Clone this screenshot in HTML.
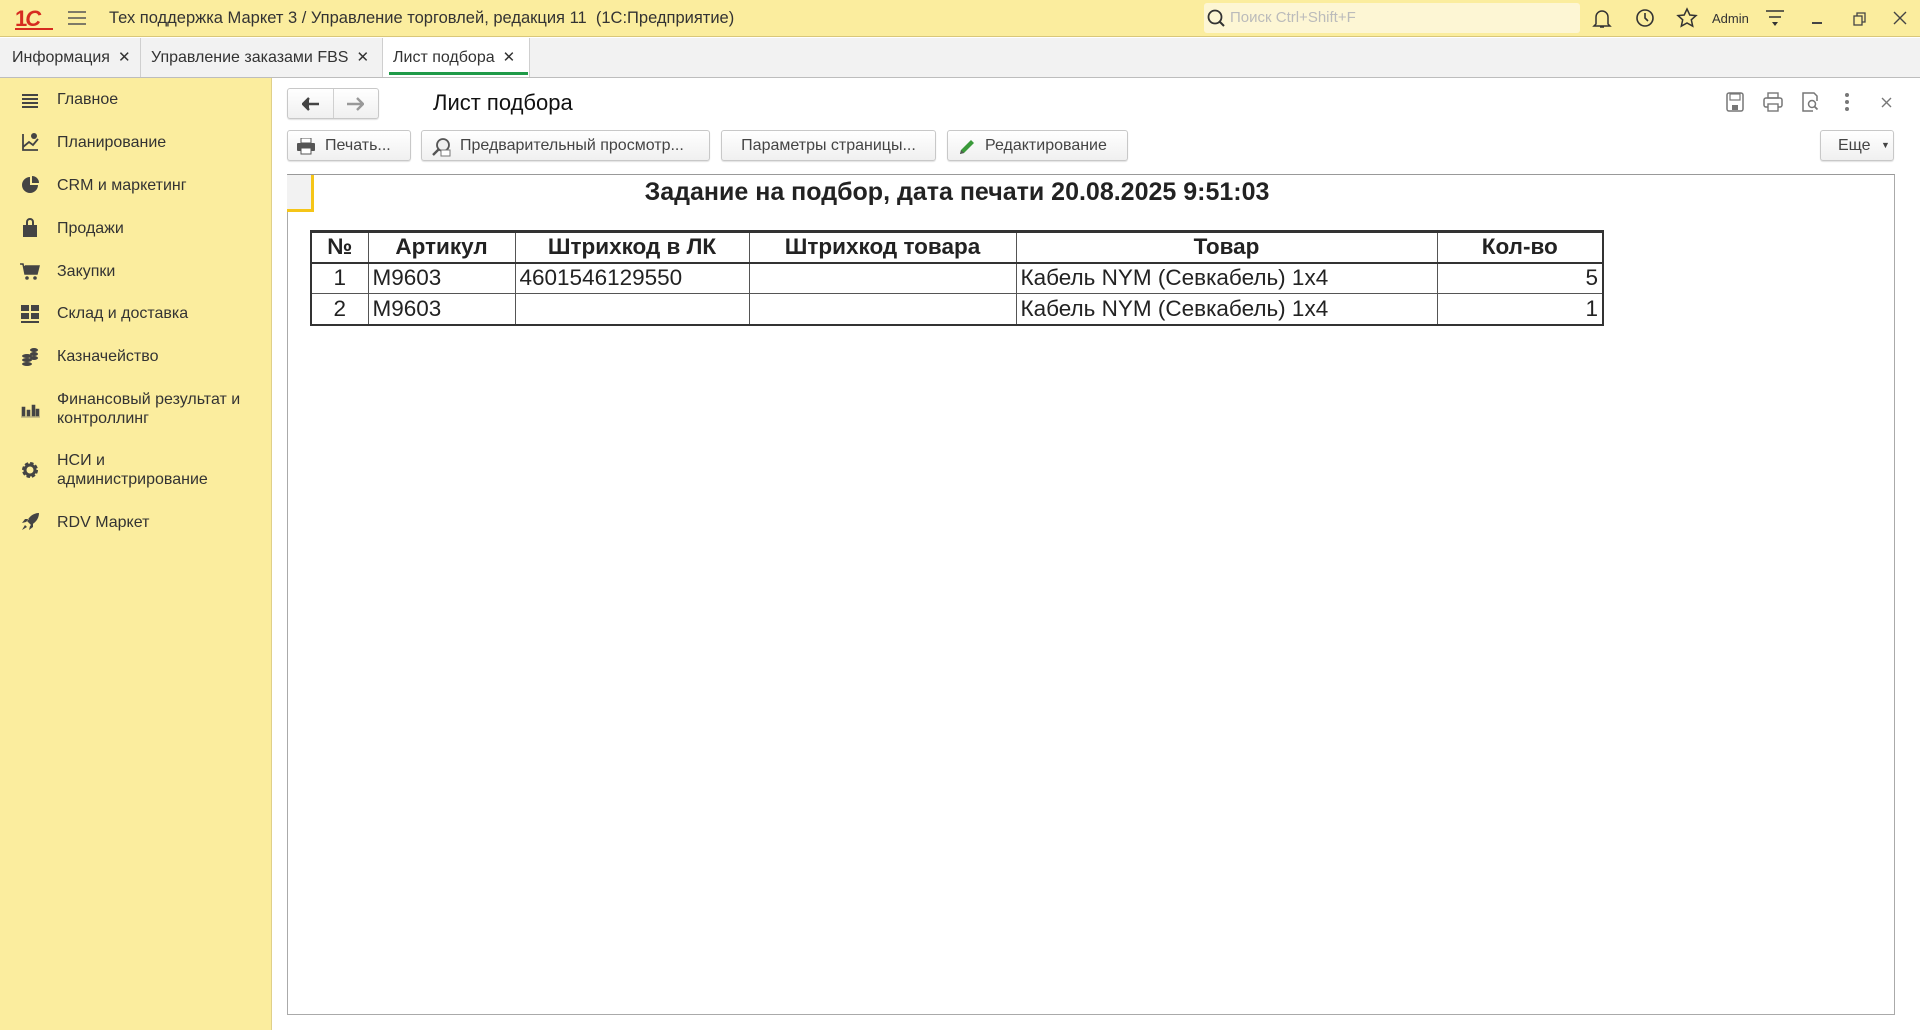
<!DOCTYPE html>
<html><head><meta charset="utf-8"><style>
*{box-sizing:border-box;margin:0;padding:0}
body{width:1920px;height:1030px;overflow:hidden;font-family:"Liberation Sans",sans-serif;color:#333;background:#fff;position:relative}
.a{position:absolute}
#hdr{left:0;top:0;width:1920px;height:37px;background:#fbed9e;border-bottom:1px solid #d9c77a}
#tabs{left:0;top:38px;width:1920px;height:40px;background:#f2f2f2;border-bottom:1px solid #bdbdbd}
.tab{position:absolute;top:0;height:39px;line-height:39px;font-size:16px;color:#333;padding-left:10px;border-right:1px solid #cfcfcf}
.tab span{margin-left:8px;font-size:15px}
#side{left:0;top:78px;width:272px;height:952px;background:#fbed9e;border-right:1px solid #e0d08a}
.si{position:absolute;left:57px;font-size:16px;color:#333;line-height:19px}
.ic{position:absolute;left:20px;width:20px;height:20px}
.btn{position:absolute;top:130px;height:31px;border:1px solid #c8c8c8;border-radius:3px;background:linear-gradient(#fff,#f0f0f0);font-size:16px;line-height:29px;color:#444;box-shadow:0 1px 1px rgba(0,0,0,.12)}
table{position:absolute;left:310px;top:230px;border-collapse:collapse;font-size:22.5px;color:#222}
td{border:1px solid #555;height:31px;padding:0 4px;white-space:nowrap}
tr.h td{font-weight:bold;text-align:center;border-top:3px solid #333;border-bottom:2px solid #333}
td:first-child{border-left:2px solid #333}
td:last-child{border-right:2px solid #333}
tr:last-child td{border-bottom:2px solid #333}
</style></head><body>
<div id="hdr" class="a">
 <div class="a" style="left:15px;top:6px;font:bold 22px 'Liberation Sans',sans-serif;color:#d62b20;letter-spacing:-2px">1<span style="font-style:italic">С</span></div>
 <div class="a" style="left:15px;top:28px;width:38px;height:2px;background:#d62b20"></div>
 <svg class="a" style="left:68px;top:10px" width="18" height="16"><path d="M0 2h18M0 8h18M0 14h18" stroke="#555" stroke-width="1.6"/></svg>
 <div class="a" style="left:109px;top:9px;font-size:16.5px;color:#333">Тех поддержка Маркет 3 / Управление торговлей, редакция 11&nbsp; (1С:Предприятие)</div>
 <div class="a" style="left:1204px;top:3px;width:376px;height:30px;background:#fdf6d4;border-radius:3px"></div>
 <svg class="a" style="left:1207px;top:9px" width="20" height="20"><circle cx="8" cy="8" r="6.5" fill="none" stroke="#333" stroke-width="1.8"/><path d="M12 12l5 5" stroke="#333" stroke-width="2"/></svg>
 <div class="a" style="left:1230px;top:9px;font-size:15px;color:#bbb">Поиск Ctrl+Shift+F</div>
 <svg class="a" style="left:1592px;top:8px" width="20" height="22"><path d="M4 16V9a6 6 0 0 1 12 0v7l2 2H2z M8 19h4" fill="none" stroke="#333" stroke-width="1.5"/></svg>
 <svg class="a" style="left:1634px;top:7px" width="22" height="22"><circle cx="11" cy="11" r="8" fill="none" stroke="#333" stroke-width="1.6"/><path d="M11 6v5l3 3" fill="none" stroke="#333" stroke-width="1.6"/></svg>
 <svg class="a" style="left:1676px;top:7px" width="22" height="22"><path d="M11 2l2.8 6 6.2.6-4.7 4.2 1.4 6.4L11 16l-5.7 3.2 1.4-6.4L2 8.6 8.2 8z" fill="none" stroke="#333" stroke-width="1.5"/></svg>
 <div class="a" style="left:1712px;top:11px;font-size:13px;color:#333">Admin</div>
 <svg class="a" style="left:1765px;top:9px" width="20" height="20"><path d="M1 2h18M4 8h12" stroke="#333" stroke-width="1.5"/><path d="M7 13h6l-3 4z" fill="#333"/></svg>
 <div class="a" style="left:1812px;top:22px;width:10px;height:1.5px;background:#444"></div>
 <svg class="a" style="left:1853px;top:12px" width="14" height="14"><rect x="1" y="4" width="8" height="9" fill="none" stroke="#444" stroke-width="1.3"/><path d="M4 4V1h8v9h-3" fill="none" stroke="#444" stroke-width="1.3"/></svg>
 <svg class="a" style="left:1893px;top:11px" width="14" height="14"><path d="M1 1l12 12M13 1L1 13" stroke="#444" stroke-width="1.4"/></svg>
</div>
<div id="tabs" class="a">
 <div class="tab" style="left:0;width:141px;padding-left:12px">Информация<span>✕</span></div>
 <div class="tab" style="left:141px;width:242px">Управление заказами FBS<span>✕</span></div>
 <div class="tab" style="left:383px;width:147px;background:#fff">Лист подбора<span>✕</span></div>
 <div class="a" style="left:389px;top:34px;width:139px;height:3px;background:#1f9a48"></div>
</div>
<div id="side" class="a">
 <svg class="ic" style="top:13px" viewBox="0 0 20 20"><path d="M2 4h16M2 8h16M2 12h16M2 16h16" stroke="#444" stroke-width="2"/></svg>
 <div class="si" style="top:12px">Главное</div>
 <svg class="ic" style="top:54px" viewBox="0 0 20 20"><path d="M3 2v16h15M3 15l6-5 4 3 5-6" fill="none" stroke="#444" stroke-width="1.8"/><circle cx="14" cy="4" r="3" fill="#444"/></svg>
 <div class="si" style="top:55px">Планирование</div>
 <svg class="ic" style="top:97px" viewBox="0 0 20 20"><path d="M10 2a8 8 0 1 0 8 8h-8z" fill="#444"/><path d="M12 1v7h7a7 7 0 0 0-7-7z" fill="#444"/></svg>
 <div class="si" style="top:98px">CRM и маркетинг</div>
 <svg class="ic" style="top:140px" viewBox="0 0 20 20"><rect x="3" y="7" width="14" height="12" fill="#444"/><path d="M7 8V4a3 3 0 0 1 6 0v4" fill="none" stroke="#444" stroke-width="2"/></svg>
 <div class="si" style="top:141px">Продажи</div>
 <svg class="ic" style="top:183px" viewBox="0 0 20 20"><path d="M0 3h3l2 10h12l2-8H5" fill="#444" stroke="#444" stroke-width="1.5"/><circle cx="7" cy="17" r="1.8" fill="#444"/><circle cx="15" cy="17" r="1.8" fill="#444"/></svg>
 <div class="si" style="top:184px">Закупки</div>
 <svg class="ic" style="top:225px" viewBox="0 0 20 20"><rect x="1" y="2" width="8" height="6" fill="#444"/><rect x="11" y="2" width="8" height="6" fill="#444"/><rect x="1" y="10" width="8" height="6" fill="#444"/><rect x="11" y="10" width="8" height="6" fill="#444"/><rect x="1" y="18" width="18" height="2" fill="#444"/></svg>
 <div class="si" style="top:226px">Склад и доставка</div>
 <svg class="ic" style="top:268px" viewBox="0 0 20 20"><ellipse cx="7" cy="10" rx="5" ry="2" fill="#444"/><ellipse cx="7" cy="14" rx="5" ry="2" fill="#444"/><ellipse cx="7" cy="18" rx="5" ry="2" fill="#444"/><ellipse cx="14" cy="4" rx="4" ry="2" fill="#444"/><ellipse cx="14" cy="8" rx="4" ry="2" fill="#444"/><ellipse cx="14" cy="12" rx="4" ry="2" fill="#444"/></svg>
 <div class="si" style="top:269px">Казначейство</div>
 <svg class="ic" style="top:321px" viewBox="0 0 20 20"><path d="M2 8h3v9H2zM7 11h3v6H7zM12 6h3v11h-3zM16 10h3v7h-3zM1 18h19" fill="#444" stroke="#444" stroke-width=".6"/></svg>
 <div class="si" style="top:312px">Финансовый результат и<br>контроллинг</div>
 <svg class="ic" style="top:382px" viewBox="0 0 20 20"><circle cx="10" cy="10" r="6" fill="none" stroke="#444" stroke-width="4" stroke-dasharray="3 1.7"/><circle cx="10" cy="10" r="5" fill="none" stroke="#444" stroke-width="3"/></svg>
 <div class="si" style="top:373px">НСИ и<br>администрирование</div>
 <svg class="ic" style="top:434px" viewBox="0 0 20 20"><path d="M19 1c-6 0-10 4-12 8l4 4c4-2 8-6 8-12zM6 10l-4 1 3-4h4zM10 14l-1 4 4-3v-4zM5 13l-3 5 5-3z" fill="#444"/></svg>
 <div class="si" style="top:435px">RDV Маркет</div>
</div>
<!-- content -->
<div class="a" style="left:287px;top:88px;width:92px;height:31px;border:1px solid #c8c8c8;border-radius:3px;background:linear-gradient(#fff,#f0f0f0);box-shadow:0 1px 1px rgba(0,0,0,.12)">
 <div class="a" style="left:45px;top:0;width:1px;height:29px;background:#d0d0d0"></div>
 <svg class="a" style="left:14px;top:8px" width="18" height="14"><path d="M1 7h16M7 1L1 7l6 6" fill="#444" stroke="#444" stroke-width="2.4"/></svg>
 <svg class="a" style="left:58px;top:8px" width="18" height="14"><path d="M1 7h16M11 1l6 6-6 6" fill="none" stroke="#999" stroke-width="2.4"/></svg>
</div>
<div class="a" style="left:433px;top:90px;font-size:22px;color:#111">Лист подбора</div>
<svg class="a" style="left:1726px;top:92px" width="18" height="20"><rect x="1" y="1" width="16" height="18" rx="2" fill="none" stroke="#777" stroke-width="1.5"/><rect x="4" y="2" width="10" height="6" fill="none" stroke="#777" stroke-width="1.2"/><rect x="6" y="13" width="6" height="5" fill="#777"/></svg>
<svg class="a" style="left:1763px;top:92px" width="20" height="20"><rect x="5" y="1" width="10" height="5" fill="none" stroke="#777" stroke-width="1.4"/><rect x="1" y="6" width="18" height="9" rx="2" fill="none" stroke="#777" stroke-width="1.5"/><rect x="5" y="12" width="10" height="7" fill="#fff" stroke="#777" stroke-width="1.4"/></svg>
<svg class="a" style="left:1801px;top:92px" width="18" height="20"><path d="M12 19H2V1h11l3 3v5" fill="none" stroke="#777" stroke-width="1.5"/><circle cx="11" cy="12" r="3.5" fill="none" stroke="#777" stroke-width="1.5"/><path d="M13.5 14.5l3 3" stroke="#777" stroke-width="1.8"/></svg>
<svg class="a" style="left:1844px;top:92px" width="6" height="20"><circle cx="3" cy="3" r="2" fill="#777"/><circle cx="3" cy="10" r="2" fill="#777"/><circle cx="3" cy="17" r="2" fill="#777"/></svg>
<svg class="a" style="left:1881px;top:97px" width="11" height="11"><path d="M1 1l9 9M10 1L1 10" stroke="#777" stroke-width="1.4"/></svg>

<div class="btn" style="left:287px;width:124px"><svg class="a" style="left:9px;top:7px" width="18" height="17"><rect x="4" y="0" width="10" height="5" fill="#fff" stroke="#555"/><rect x="0" y="5" width="18" height="8" rx="1" fill="#555"/><rect x="4" y="10" width="10" height="6" fill="#fff" stroke="#555"/></svg><span style="position:absolute;left:37px">Печать...</span></div>
<div class="btn" style="left:421px;width:289px"><svg class="a" style="left:10px;top:6px" width="20" height="20"><circle cx="11" cy="8" r="6" fill="#eee" stroke="#555" stroke-width="1.8"/><path d="M7 12l-6 6" stroke="#555" stroke-width="2.4"/><rect x="9" y="13" width="9" height="6" fill="#fff" stroke="#777"/></svg><span style="position:absolute;left:38px">Предварительный просмотр...</span></div>
<div class="btn" style="left:721px;width:215px;text-align:center">Параметры страницы...</div>
<div class="btn" style="left:947px;width:181px"><svg class="a" style="left:10px;top:7px" width="18" height="18"><path d="M2 16l1-4L13 2l3 3L6 15z" fill="#3a9a3a"/><path d="M2 16l1-4 3 3z" fill="#555"/></svg><span style="position:absolute;left:37px">Редактирование</span></div>
<div class="btn" style="left:1820px;width:74px"><span style="position:absolute;left:17px">Еще</span><span style="position:absolute;left:60px;top:0;font-size:9px">▼</span></div>

<div class="a" style="left:287px;top:174px;width:1608px;height:841px;border:1px solid #aaa;border-top:1.5px solid #999"></div>
<div class="a" style="left:287px;top:175px;width:27px;height:37px;background:#f2f2f2;border-right:3px solid #f5c518;border-bottom:3px solid #f5c518"></div>
<div class="a" style="left:557px;top:178px;width:800px;text-align:center;font-weight:bold;font-size:25px;color:#222">Задание на подбор, дата печати 20.08.2025 9:51:03</div>
<table>
<colgroup><col style="width:57px"><col style="width:147px"><col style="width:234px"><col style="width:267px"><col style="width:421px"><col style="width:166px"></colgroup>
<tr class="h"><td>№</td><td>Артикул</td><td>Штрихкод в ЛК</td><td>Штрихкод товара</td><td>Товар</td><td>Кол-во</td></tr>
<tr><td style="text-align:center">1</td><td>M9603</td><td>4601546129550</td><td></td><td>Кабель NYM (Севкабель) 1x4</td><td style="text-align:right">5</td></tr>
<tr><td style="text-align:center">2</td><td>M9603</td><td></td><td></td><td>Кабель NYM (Севкабель) 1x4</td><td style="text-align:right">1</td></tr>
</table>
</body></html>
